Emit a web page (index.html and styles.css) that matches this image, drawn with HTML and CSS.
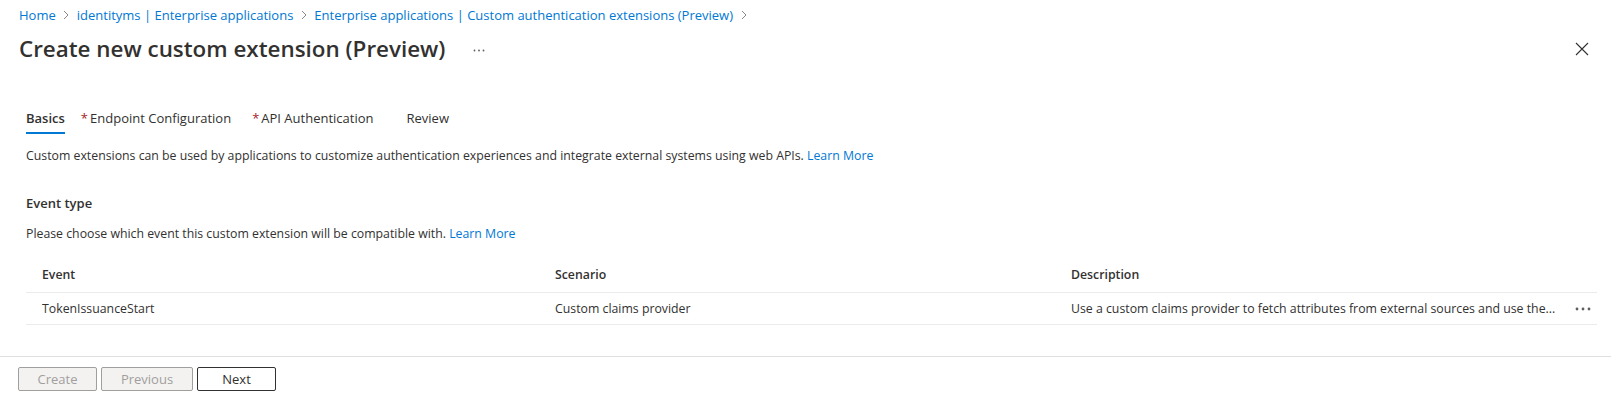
FILE: index.html
```html
<!DOCTYPE html>
<html lang="en">
<head>
<meta charset="utf-8">
<title>Create new custom extension (Preview)</title>
<link rel="stylesheet" href="styles.css">
</head>
<body>
<div class="page">
  <nav class="breadcrumb">
    <a class="crumb" href="#">Home</a>
    <svg class="chev" viewBox="0 0 8 10" width="8" height="10"><path d="M2 1 L6 5 L2 9" fill="none" stroke="#8a8886" stroke-width="1"/></svg>
    <a class="crumb" href="#">identityms | Enterprise applications</a>
    <svg class="chev" viewBox="0 0 8 10" width="8" height="10"><path d="M2 1 L6 5 L2 9" fill="none" stroke="#8a8886" stroke-width="1"/></svg>
    <a class="crumb" href="#">Enterprise applications | Custom authentication extensions (Preview)</a>
    <svg class="chev" viewBox="0 0 8 10" width="8" height="10"><path d="M2 1 L6 5 L2 9" fill="none" stroke="#8a8886" stroke-width="1"/></svg>
  </nav>

  <header class="title-row">
    <h1 class="title">Create new custom extension (Preview)</h1>
    <span class="more">
      <svg viewBox="0 0 12 3" width="12" height="3"><circle cx="1.5" cy="1.5" r="0.9" fill="#605e5c"/><circle cx="6" cy="1.5" r="0.9" fill="#605e5c"/><circle cx="10.5" cy="1.5" r="0.9" fill="#605e5c"/></svg>
    </span>
    <span class="spacer"></span>
    <button class="close" aria-label="Close">
      <svg viewBox="0 0 14 14" width="14" height="14"><path d="M1 1 L13 13 M13 1 L1 13" stroke="#323130" stroke-width="1.1" fill="none"/></svg>
    </button>
  </header>

  <main class="content">
    <div class="tabs">
      <span class="tab active">Basics</span>
      <span class="tab"><span class="req">*</span>Endpoint Configuration</span>
      <span class="tab api"><span class="req">*</span>API Authentication</span>
      <span class="tab review">Review</span>
    </div>

    <p class="intro">Custom extensions can be used by applications to customize authentication experiences and integrate external systems using web APIs. <a href="#">Learn More</a></p>

    <h2 class="section">Event type</h2>
    <p class="sub">Please choose which event this custom extension will be compatible with. <a href="#">Learn More</a></p>

    <div class="grid">
      <div class="row head">
        <div class="cell">Event</div>
        <div class="cell">Scenario</div>
        <div class="cell">Description</div>
        <div class="cell act"></div>
      </div>
      <div class="row">
        <div class="cell">TokenIssuanceStart</div>
        <div class="cell">Custom claims provider</div>
        <div class="cell desc">Use a custom claims provider to fetch attributes from external sources and use the...</div>
        <div class="cell act">
          <svg viewBox="0 0 16 4" width="16" height="4"><circle cx="2" cy="2" r="1.4" fill="#605e5c"/><circle cx="8" cy="2" r="1.4" fill="#605e5c"/><circle cx="14" cy="2" r="1.4" fill="#605e5c"/></svg>
        </div>
      </div>
    </div>
  </main>

  <footer class="footer">
    <button class="btn" disabled>Create</button>
    <button class="btn wide" disabled>Previous</button>
    <button class="btn primary">Next</button>
  </footer>
</div>
</body>
</html>
```

FILE: styles.css
```css
* { box-sizing: border-box; }
html, body { margin: 0; padding: 0; background: #ffffff; }
body {
  font-family: "Open Sans", "Noto Sans", "Liberation Sans", sans-serif;
  font-size: 12.3px;
  color: #323130;
}
a { color: #0078d4; text-decoration: none; }

.breadcrumb {
  display: flex;
  align-items: center;
  gap: 6.5px;
  padding: 5px 0 0 19px;
  height: 25px;
  line-height: 20px;
  font-size: 13px;
}
.chev { display: block; }

.title-row {
  display: flex;
  align-items: center;
  height: 48px;
  padding: 0 22px 0 19px;
}
.title {
  margin: 0;
  font-size: 22.4px;
  font-weight: 600;
  line-height: 32px;
  color: #323130;
}
.more { display: flex; margin-left: 28px; padding-top: 2px; }
.spacer { flex: 1; }
.close {
  border: 0;
  background: transparent;
  padding: 0;
  display: flex;
}

.content { padding: 35px 14px 0 26px; }

.tabs {
  display: flex;
  gap: 16px;
  height: 36px;
  font-size: 13px;
}
.tab {
  position: relative;
  line-height: 20px;
  height: 28px;
}
.tab.api { margin-left: 5px; }
.tab.review { margin-left: 17px; }
.tab.active { font-weight: 600; }
.tab.active::after {
  content: "";
  position: absolute;
  left: 0; right: 0;
  top: 24px;
  height: 2px;
  background: #0078d4;
}
.req { color: #a4262c; margin-right: 2px; }

.intro { margin: 2px 0 0; line-height: 20px; }
.section {
  margin: 27px 0 0;
  font-size: 13px;
  font-weight: 600;
  line-height: 20px;
}
.sub { margin: 11px 0 0; line-height: 20px; }

.grid { margin-top: 13px; }
.row {
  display: grid;
  grid-template-columns: 513px 516px 1fr 40px;
  align-items: center;
  border-bottom: 1px solid #edebe9;
}
.row.head { height: 36px; font-weight: 600; }
.row:not(.head) { height: 32px; }
.cell { padding-left: 16px; white-space: nowrap; overflow: hidden; }
.act { padding-left: 18px; display: flex; justify-content: flex-start; }

.footer {
  margin-top: 31px;
  border-top: 1px solid #e1dfdd;
  padding: 10px 18px;
  display: flex;
  gap: 4px;
}
.btn {
  font-family: inherit;
  font-size: 13px;
  height: 24px;
  min-width: 79px;
  padding: 0 16px;
  border-radius: 2px;
  border: 1px solid #323130;
  background: #ffffff;
  color: #323130;
}
.btn.wide { min-width: 92px; }
.btn:disabled {
  background: #f3f2f1;
  border-color: #a19f9d;
  color: #a19f9d;
}
```
